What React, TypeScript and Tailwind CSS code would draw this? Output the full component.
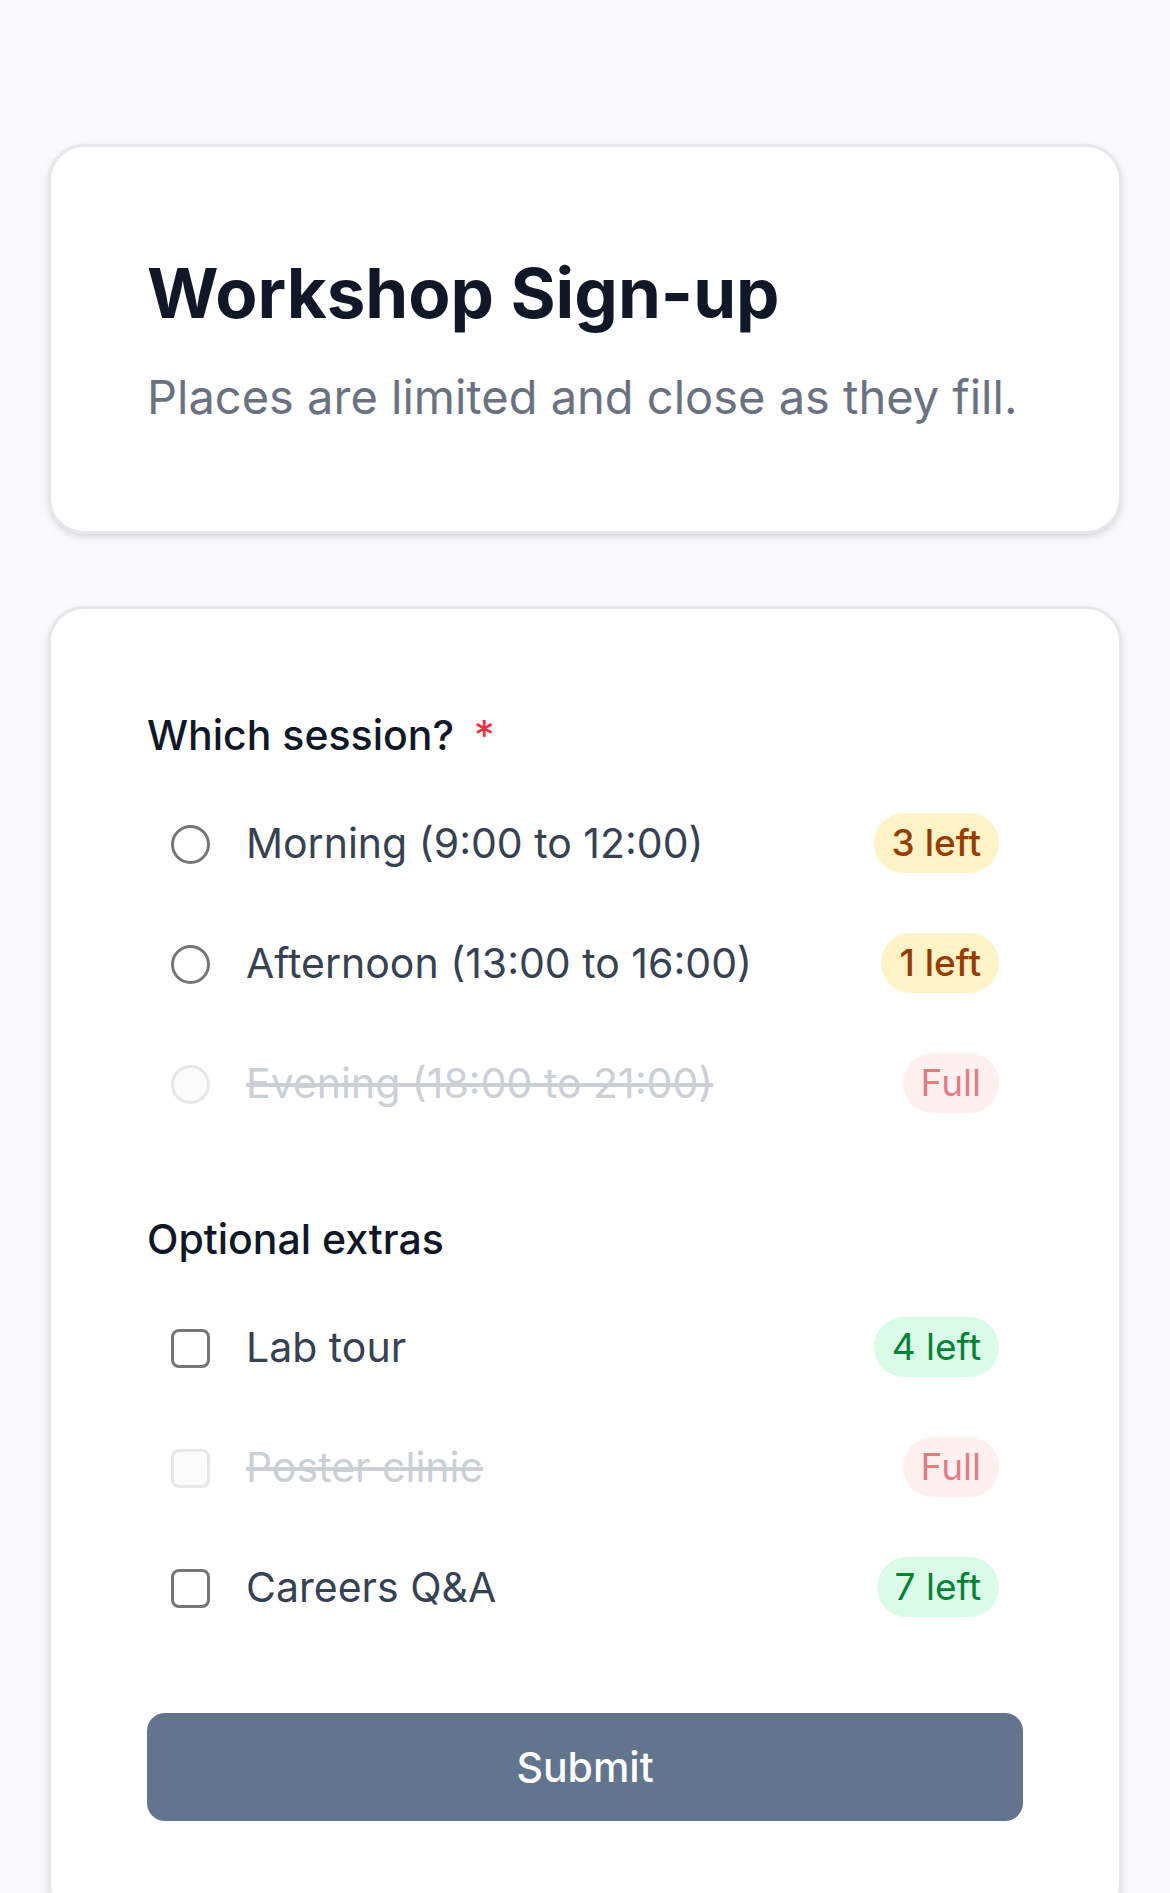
import React, { useState } from 'react'
import clsx from 'clsx'

type Option = {
  id: string
  label: string
  left: number
}

const sessions: Option[] = [
  { id: 'morning', label: 'Morning (9:00 to 12:00)', left: 3 },
  { id: 'afternoon', label: 'Afternoon (13:00 to 16:00)', left: 1 },
  { id: 'evening', label: 'Evening (18:00 to 21:00)', left: 0 },
]

const extras: Option[] = [
  { id: 'lab-tour', label: 'Lab tour', left: 4 },
  { id: 'poster-clinic', label: 'Poster clinic', left: 0 },
  { id: 'careers', label: 'Careers Q&A', left: 7 },
]

const Card = ({ children }: { children: React.ReactNode }) => (
  <div className="rounded-[36px] border-3 border-gray-200 bg-white p-24 shadow-[0_3px_9px_rgba(0,0,0,0.1),0_3px_6px_-3px_rgba(0,0,0,0.1)]">
    {children}
  </div>
)

const PlacesBadge = ({ left }: { left: number }) => (
  <span
    className={clsx(
      'shrink-0 rounded-full px-[18px] py-1.5 text-[37px] leading-12',
      left === 0 && 'bg-red-100 text-red-700',
      left > 0 && left <= 3 && 'bg-amber-100 font-medium text-amber-800',
      left > 3 && 'bg-[#dafbe8] text-green-700',
    )}
  >
    {left === 0 ? 'Full' : `${left} left`}
  </span>
)

type OptionRowProps = {
  type: 'radio' | 'checkbox'
  name: string
  option: Option
  checked: boolean
  onChange: () => void
}

const OptionRow = ({ type, name, option, checked, onChange }: OptionRowProps) => {
  const full = option.left === 0

  return (
    <label
      htmlFor={option.id}
      className={clsx('flex items-center gap-9 rounded-[18px] p-6', full ? 'cursor-not-allowed opacity-50' : 'cursor-pointer')}
    >
      <input
        id={option.id}
        type={type}
        name={name}
        value={option.id}
        checked={checked}
        disabled={full}
        onChange={onChange}
        className={clsx(
          'mt-[3px] size-[39px] shrink-0 appearance-none border-3 border-[#767676] bg-white',
          'checked:border-slate-500 checked:bg-slate-500 checked:shadow-[inset_0_0_0_6px_white]',
          'disabled:border-[#d1d1d1] disabled:bg-[#f8f8f8]',
          type === 'radio' ? 'rounded-full' : 'rounded-[8px]',
        )}
      />
      <span className={clsx('flex-1 text-[41px] leading-[60px]', full ? 'text-gray-400 line-through' : 'text-gray-700')}>
        {option.label}
      </span>
      <PlacesBadge left={option.left} />
    </label>
  )
}

export default function App() {
  const [session, setSession] = useState('')
  const [picked, setPicked] = useState<string[]>([])

  const toggleExtra = (id: string) =>
    setPicked((prev) => (prev.includes(id) ? prev.filter((x) => x !== id) : [...prev, id]))

  return (
    <main className="min-h-screen bg-gray-50 px-12 py-36 font-['Inter',sans-serif]">
      <div className="mx-auto flex max-w-[2016px] flex-col gap-18">
        <Card>
          <h1 className="text-[69px] leading-25 font-bold text-gray-900">Workshop Sign-up</h1>
          <p className="mt-4 text-[47px] leading-19 text-gray-500">Places are limited and close as they fill.</p>
        </Card>

        <Card>
          <form className="flex flex-col gap-18" onSubmit={(e) => e.preventDefault()}>
            <fieldset>
              <legend className="text-[41px] leading-[60px] font-medium text-gray-900">
                Which session?
                <span className="ml-5 font-normal text-red-500">*</span>
              </legend>
              <div className="mt-6 flex flex-col gap-3">
                {sessions.map((option) => (
                  <OptionRow
                    key={option.id}
                    type="radio"
                    name="session"
                    option={option}
                    checked={session === option.id}
                    onChange={() => setSession(option.id)}
                  />
                ))}
              </div>
            </fieldset>

            <fieldset>
              <legend className="text-[41px] leading-[60px] font-medium text-gray-900">Optional extras</legend>
              <div className="mt-6 flex flex-col gap-3">
                {extras.map((option) => (
                  <OptionRow
                    key={option.id}
                    type="checkbox"
                    name="extras"
                    option={option}
                    checked={picked.includes(option.id)}
                    onChange={() => toggleExtra(option.id)}
                  />
                ))}
              </div>
            </fieldset>

            <button
              type="submit"
              className="w-full rounded-[18px] bg-slate-500 px-12 py-6 text-[41px] leading-[60px] font-medium text-white hover:bg-slate-600"
            >
              Submit
            </button>
          </form>
        </Card>
      </div>
    </main>
  )
}
